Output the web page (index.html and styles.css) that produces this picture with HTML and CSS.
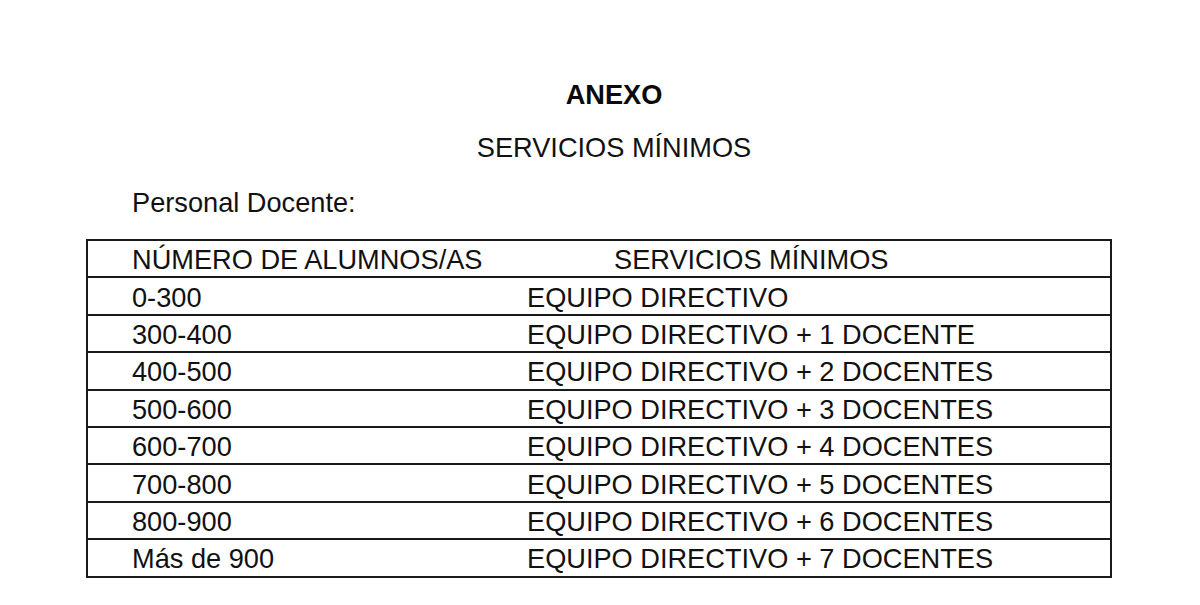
FILE: index.html
```html
<!DOCTYPE html>
<html lang="es">
<head>
<meta charset="utf-8">
<title>Anexo - Servicios mínimos</title>
<link rel="stylesheet" href="styles.css">
</head>
<body>
<div class="page">
  <div class="titles">
    <h1 class="title">ANEXO</h1>
    <p class="subtitle">SERVICIOS MÍNIMOS</p>
  </div>
  <p class="label">Personal Docente:</p>
  <div class="table">
    <div class="row head"><span class="c1">NÚMERO DE ALUMNOS/AS</span><span class="c2">SERVICIOS MÍNIMOS</span></div>
    <div class="row"><span class="c1">0-300</span><span class="c2">EQUIPO DIRECTIVO</span></div>
    <div class="row"><span class="c1">300-400</span><span class="c2">EQUIPO DIRECTIVO + 1 DOCENTE</span></div>
    <div class="row"><span class="c1">400-500</span><span class="c2">EQUIPO DIRECTIVO + 2 DOCENTES</span></div>
    <div class="row"><span class="c1">500-600</span><span class="c2">EQUIPO DIRECTIVO + 3 DOCENTES</span></div>
    <div class="row"><span class="c1">600-700</span><span class="c2">EQUIPO DIRECTIVO + 4 DOCENTES</span></div>
    <div class="row"><span class="c1">700-800</span><span class="c2">EQUIPO DIRECTIVO + 5 DOCENTES</span></div>
    <div class="row"><span class="c1">800-900</span><span class="c2">EQUIPO DIRECTIVO + 6 DOCENTES</span></div>
    <div class="row"><span class="c1">Más de 900</span><span class="c2">EQUIPO DIRECTIVO + 7 DOCENTES</span></div>
  </div>
</div>
</body>
</html>
```
FILE: styles.css
```css
html, body {
  margin: 0;
  padding: 0;
  background: #ffffff;
}
body {
  font-family: "Liberation Sans", Arial, sans-serif;
  font-size: 27.2px;
  color: #111111;
}
.page {
  padding-top: 79px;
}
.titles {
  padding-left: 28px;
  text-align: center;
}
.title {
  margin: 0;
  font-size: 27.2px;
  font-weight: bold;
  line-height: 32px;
  color: #0a0a0a;
}
.subtitle {
  margin: 21px 0 0;
  line-height: 32px;
}
.label {
  margin: 23px 0 0;
  padding-left: 132px;
  line-height: 32px;
}
.table {
  margin: 20px 0 0 86px;
  width: 1026px;
  box-sizing: border-box;
  border: 2px solid #1a1a1a;
}
.row {
  display: flex;
  align-items: center;
  height: 37.4px;
  box-sizing: border-box;
  padding: 3px 0 0 44px;
  border-bottom: 2px solid #1a1a1a;
  line-height: 30px;
}
.row:last-child {
  border-bottom: none;
  height: 35.4px;
}
.c1 {
  width: 395px;
  flex: none;
}
.head .c2 {
  padding-left: 87px;
}
```
